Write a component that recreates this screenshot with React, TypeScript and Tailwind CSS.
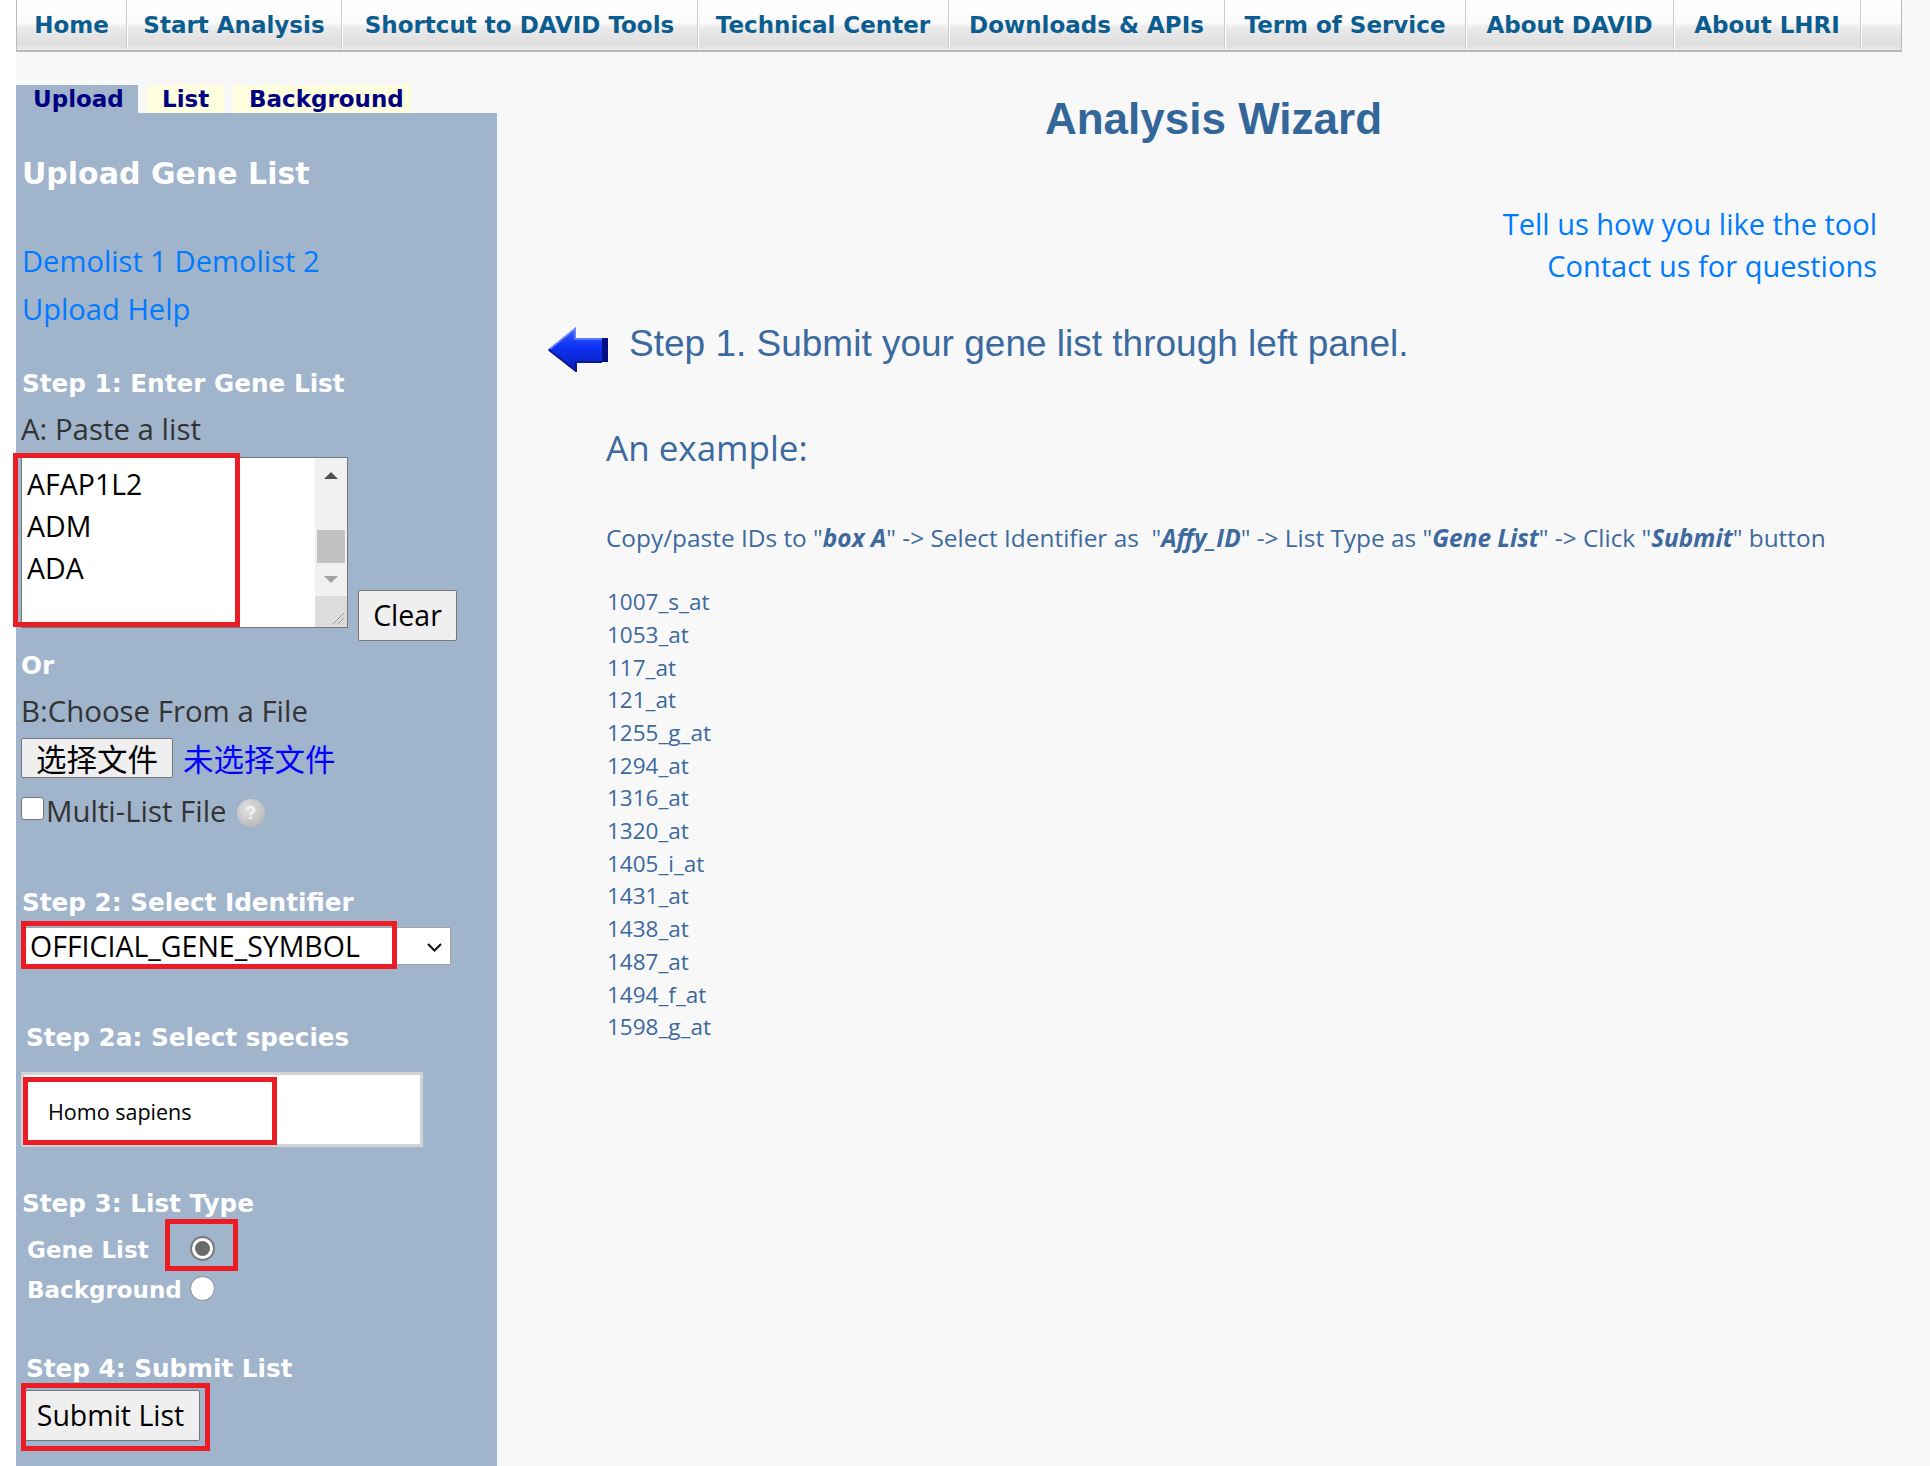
const NAV_ITEMS = [
  { label: "Home", width: "w-[110px]" },
  { label: "Start Analysis", width: "w-[215px]" },
  { label: "Shortcut to DAVID Tools", width: "w-[356px]" },
  { label: "Technical Center", width: "w-[251px]" },
  { label: "Downloads & APIs", width: "w-[276px]" },
  { label: "Term of Service", width: "w-[241px]" },
  { label: "About DAVID", width: "w-[208px]" },
  { label: "About LHRI", width: "w-[187px]" },
  { label: "", width: "w-[40px]" },
];

const EXAMPLE_IDS = [
  "1007_s_at",
  "1053_at",
  "117_at",
  "121_at",
  "1255_g_at",
  "1294_at",
  "1316_at",
  "1320_at",
  "1405_i_at",
  "1431_at",
  "1438_at",
  "1487_at",
  "1494_f_at",
  "1598_g_at",
];

const verdana = "font-['DejaVu_Sans',Verdana,sans-serif] font-bold";
const segoe = "font-['Open_Sans','Noto_Sans',sans-serif]";
const arial = "font-['Liberation_Sans',Arial,sans-serif]";
const cjk = "font-['Noto_Sans_CJK_SC',sans-serif]";

const stepHeading = `${verdana} text-[24.7px] leading-[32px] text-white`;
const bodyText = `${segoe} text-[29.4px] leading-[40px] text-[#333333]`;
const redBox = "absolute border-[5px] border-[#ec1c24] pointer-events-none";

function NavBar() {
  return (
    <div className="flex h-[52px] w-[1886px] border-l border-r border-b-2 border-[#b9b9b9] bg-[linear-gradient(to_bottom,#ffffff_0%,#fbfbfb_46%,#ececec_54%,#dedede_88%,#e9e9e9_100%)]">
      {NAV_ITEMS.map((item, i) => (
        <div
          key={i}
          className={`${item.width} h-full flex items-center justify-center ${
            i < NAV_ITEMS.length - 1 ? "border-r border-[#cdcdcd] shadow-[1px_0_0_#ffffff]" : ""
          }`}
        >
          <span className={`${verdana} text-[23px] text-[#0b5d8f] whitespace-nowrap`}>{item.label}</span>
        </div>
      ))}
    </div>
  );
}

function FakeTextarea() {
  return (
    <div className="relative w-[327px] h-[171px] bg-white border border-[#767676]">
      <div className={`${segoe} text-[28.5px] leading-[42px] text-black pl-[5px] pt-[5px]`}>
        <div>AFAP1L2</div>
        <div>ADM</div>
        <div>ADA</div>
      </div>
      {/* scrollbar */}
      <div className="absolute right-0 top-0 bottom-0 w-[32px] bg-[#f1f1f1] flex flex-col">
        <div className="h-[34px] flex items-center justify-center">
          <div className="w-0 h-0 border-l-[7px] border-r-[7px] border-b-[7px] border-l-transparent border-r-transparent border-b-[#505050]" />
        </div>
        <div className="h-[38px]" />
        <div className="h-[33px] mx-[2px] bg-[#c1c1c1]" />
        <div className="h-[33px] flex items-center justify-center">
          <div className="w-0 h-0 border-l-[7px] border-r-[7px] border-t-[7px] border-l-transparent border-r-transparent border-t-[#a3a3a3]" />
        </div>
        <div className="flex-1 bg-[#dcdcdc] relative">
          <svg className="absolute right-[2px] bottom-[2px]" width="16" height="16" viewBox="0 0 16 16">
            <line x1="15" y1="4" x2="4" y2="15" stroke="#9a9a9a" strokeWidth="1" />
            <line x1="15" y1="9" x2="9" y2="15" stroke="#9a9a9a" strokeWidth="1" />
          </svg>
        </div>
      </div>
    </div>
  );
}

function Radio({ checked }: { checked: boolean }) {
  if (checked) {
    return (
      <div className="w-[25px] h-[25px] rounded-full bg-white border-2 border-[#7b7b7b] flex items-center justify-center">
        <div className="w-[15px] h-[15px] rounded-full bg-[#6b6b6b]" />
      </div>
    );
  }
  return <div className="w-[25px] h-[25px] rounded-full bg-white border border-[#8a8a8a]" />;
}

function LeftPanel() {
  return (
    <div className="w-[481px] flex flex-col pt-[33px]">
      <div className={`flex h-[28px] ${verdana} text-[23px] leading-[28px] text-[#000080]`}>
        <div className="w-[122px] bg-[#a0b4cc] pl-[17px]">Upload</div>
        <div className="w-[77px] ml-[9px] bg-[#ffffe0] pl-[15px]">List</div>
        <div className="w-[178px] ml-[9px] bg-[#ffffe0] pl-[16px]">Background</div>
      </div>
      <div className="flex-1 bg-[#a0b4cc] pl-[5px] flex flex-col">
        <h2 className={`mt-[41px] ${verdana} text-[30px] leading-[40px] text-white pl-[1px]`}>Upload Gene List</h2>
        <div className={`mt-[47px] ${segoe} text-[29.1px] leading-[40px] text-[#007bff] pl-[1px]`}>
          Demolist 1 Demolist 2
        </div>
        <div className={`mt-[8px] ${segoe} text-[29.1px] leading-[40px] text-[#007bff] pl-[1px]`}>Upload Help</div>

        <div className={`mt-[39px] ${stepHeading} pl-[1px]`}>Step 1: Enter Gene List</div>
        <div className={`mt-[9px] ${bodyText}`}>A: Paste a list</div>

        <div className="mt-[8px] flex items-start">
          <div className="relative">
            <FakeTextarea />
            <div className={`${redBox} left-[-8px] top-[-4px] w-[227px] h-[174px]`} />
          </div>
          <button
            className={`ml-[10px] mt-[133px] w-[99px] h-[51px] bg-[#efefef] border border-[#767676] rounded-[2px] ${segoe} text-[28.5px] leading-none text-black`}
          >
            Clear
          </button>
        </div>

        <div className={`mt-[9px] ${stepHeading}`}>Or</div>
        <div className={`mt-[9px] ${bodyText}`}>B:Choose From a File</div>
        <div className="mt-[7px] flex items-center h-[40px]">
          <button
            className={`w-[152px] h-[40px] bg-[#efefef] border border-[#767676] rounded-[2px] ${cjk} text-[30.5px] leading-none text-black`}
          >
            选择文件
          </button>
          <span className={`ml-[10px] ${cjk} text-[30.5px] leading-none text-[#0000ff]`}>未选择文件</span>
        </div>

        <div className="mt-[13px] flex items-start h-[40px]">
          <div className="mt-[6px] w-[23px] h-[23px] bg-white border border-[#767676] rounded-[3px]" />
          <span className={`ml-[2px] ${bodyText}`}>Multi-List File</span>
          <div className="ml-[10px] mt-[8px] w-[28px] h-[28px] rounded-full bg-[radial-gradient(circle_at_40%_35%,#e2e2e2,#adadad)] flex items-center justify-center">
            <span className={`${arial} font-bold text-[18px] leading-none text-[#f4f4f4]`}>?</span>
          </div>
        </div>

        <div className={`mt-[56px] ${stepHeading} pl-[1px]`}>Step 2: Select Identifier</div>
        <div className="mt-[8px] ml-[2px] relative w-[428px] h-[38px] bg-white border border-[#a3a3a3] flex items-center">
          <span className={`pl-[6px] ${segoe} text-[28.5px] leading-none text-black`}>OFFICIAL_GENE_SYMBOL</span>
          <svg className="absolute left-[403px] top-[15px]" width="15" height="9" viewBox="0 0 15 9">
            <polyline points="1,1 7.5,7.5 14,1" fill="none" stroke="#111111" strokeWidth="2" />
          </svg>
          <div className={`${redBox} left-[-3px] top-[-7px] w-[376px] h-[48px]`} />
        </div>

        <div className={`mt-[57px] ${stepHeading} pl-[5px]`}>Step 2a: Select species</div>
        <div className="mt-[18px] relative w-[402px] h-[75px] bg-white border-[3px] border-[#d3d3d3] flex items-center pt-[4px]">
          <span className={`pl-[24px] ${segoe} text-[21.5px] leading-none text-black`}>Homo sapiens</span>
          <div className={`${redBox} left-[-1px] top-[2px] w-[254px] h-[68px]`} />
        </div>

        <div className={`mt-[41px] ${stepHeading} pl-[1px]`}>Step 3: List Type</div>
        <div className={`mt-[15px] flex h-[30px] ${verdana} text-[23px] leading-[30px] text-white`}>
          <span className="w-[169px] pl-[6px]">Gene List</span>
          <div className="relative mt-[1px] h-[25px]">
            <Radio checked />
            <div className={`${redBox} left-[-25px] top-[-17px] w-[73px] h-[52px]`} />
          </div>
        </div>
        <div className={`mt-[10px] flex h-[30px] ${verdana} text-[23px] leading-[30px] text-white`}>
          <span className="w-[169px] pl-[6px] whitespace-nowrap">Background</span>
          <div className="mt-[1px] h-[25px]">
            <Radio checked={false} />
          </div>
        </div>

        <div className={`mt-[48px] ${stepHeading} pl-[5px]`}>Step 4: Submit List</div>
        <div className="mt-[5px] ml-[4px] relative w-[175px]">
          <button
            className={`w-[175px] h-[51px] bg-[#efefef] border border-[#767676] rounded-[2px] ${segoe} text-[28.5px] leading-none text-black pr-[4px]`}
          >
            Submit List
          </button>
          <div className={`${redBox} left-[-4px] top-[-7px] w-[189px] h-[68px]`} />
        </div>
      </div>
    </div>
  );
}

function BlueArrow() {
  return (
    <svg className="mt-[5px] shrink-0" width="60" height="45" viewBox="0 0 60 45">
      <defs>
        <linearGradient id="arrowFill" x1="0" y1="0" x2="0" y2="1">
          <stop offset="0" stopColor="#3a63ff" />
          <stop offset="0.45" stopColor="#0d31f2" />
          <stop offset="1" stopColor="#0a1fb5" />
        </linearGradient>
      </defs>
      <polygon points="0,22.5 28,0 28,11 60,11 60,35 28,35 28,45" fill="url(#arrowFill)" />
      <rect x="54" y="11" width="6" height="24" fill="#00117f" />
      <polyline points="1,23 28,44 28,35 54,35" fill="none" stroke="#0a1a8e" strokeWidth="2" />
      <polyline points="2,22 27,2 27,12 54,12" fill="none" stroke="#6f8cff" strokeWidth="1.5" />
    </svg>
  );
}

function RightContent() {
  const strong = "font-bold italic";
  return (
    <div className="flex-1 flex flex-col">
      <h1 className={`mt-[41px] text-center ${arial} font-bold text-[44px] leading-[52px] text-[#336699]`}>
        Analysis Wizard
      </h1>
      <div className={`mt-[58px] pr-[53px] text-right ${segoe} text-[29px] leading-[42px] text-[#007bff]`}>
        <div>Tell us how you like the tool</div>
        <div>Contact us for questions</div>
      </div>
      <div className="mt-[35px] pl-[51px] flex items-start">
        <BlueArrow />
        <span className={`ml-[21px] ${arial} text-[37px] leading-[44px] text-[#3b6aa0] whitespace-nowrap`}>
          Step 1. Submit your gene list through left panel.
        </span>
      </div>
      <div className={`mt-[52px] pl-[109px] ${segoe} text-[35px] leading-[48px] text-[#3d6a9e]`}>An example:</div>
      <p className={`mt-[49.6px] pl-[109px] ${segoe} text-[24.4px] leading-[32px] text-[#3d6a9e] whitespace-nowrap`}>
        Copy/paste IDs to "<span className={strong}>box A</span>" -&gt; Select Identifier as{"\u00a0"} "
        <span className={strong}>Affy_ID</span>" -&gt; List Type as "<span className={strong}>Gene List</span>" -&gt; Click "
        <span className={strong}>Submit</span>" button
      </p>
      <div className={`mt-[32.5px] pl-[110px] ${segoe} text-[22.5px] leading-[32.7px] text-[#3d6a9e]`}>
        {EXAMPLE_IDS.map((id) => (
          <div key={id}>{id}</div>
        ))}
      </div>
    </div>
  );
}

export default function App() {
  return (
    <div className={`min-h-[1466px] bg-white pl-[16px] ${segoe}`}>
      <div className="min-h-[1466px] bg-[#f8f8f8] flex flex-col">
        <NavBar />
        <div className="flex flex-1">
          <LeftPanel />
          <RightContent />
        </div>
      </div>
    </div>
  );
}
